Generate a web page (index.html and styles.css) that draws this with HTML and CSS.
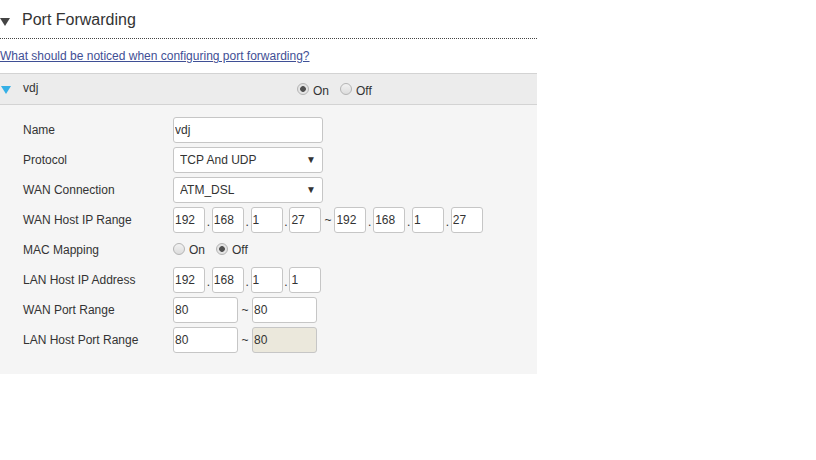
FILE: index.html
```html
<!DOCTYPE html>
<html lang="en">
<head>
    <meta charset="UTF-8">
    <title>Port Forwarding</title>
    <link rel="stylesheet" href="styles.css">
</head>
<body>

<div class="page">
    <div class="title">
        <svg class="title-arrow" width="10" height="8" viewBox="0 0 10 8"><polygon points="0,0 10,0 5,8" fill="#444"/></svg>
        <span>Port Forwarding</span>
    </div>

    <div class="notice">
        <a href="#">What should be noticed when configuring port forwarding?</a>
    </div>

    <div class="rule-bar">
        <svg class="bar-arrow" width="10" height="8" viewBox="0 0 10 8"><polygon points="0,0 10,0 5,8" fill="#35b0e6"/></svg>
        <span class="rule-name">vdj</span>
        <div class="radios bar-radios">
            <label><input type="radio" name="enable" checked> On</label>
            <label><input type="radio" name="enable"> Off</label>
        </div>
    </div>

    <div class="rule-body">
        <div class="row">
            <div class="label">Name</div>
            <input class="text wide" type="text" value="vdj">
        </div>
        <div class="row">
            <div class="label">Protocol</div>
            <span class="select-wrap">
                <select class="text wide select"><option>TCP And UDP</option></select>
                <span class="caret">&#9660;</span>
            </span>
        </div>
        <div class="row">
            <div class="label">WAN Connection</div>
            <span class="select-wrap">
                <select class="text wide select"><option>ATM_DSL</option></select>
                <span class="caret">&#9660;</span>
            </span>
        </div>
        <div class="row">
            <div class="label">WAN Host IP Range</div>
            <input class="text ip" value="192"><span class="dot">.</span><input class="text ip" value="168"><span class="dot">.</span><input class="text ip" value="1"><span class="dot">.</span><input class="text ip" value="27">
            <span class="tilde ip-tilde">~</span>
            <input class="text ip" value="192"><span class="dot">.</span><input class="text ip" value="168"><span class="dot">.</span><input class="text ip" value="1"><span class="dot">.</span><input class="text ip" value="27">
        </div>
        <div class="row">
            <div class="label">MAC Mapping</div>
            <div class="radios">
                <label><input type="radio" name="mac"> On</label>
                <label><input type="radio" name="mac" checked> Off</label>
            </div>
        </div>
        <div class="row">
            <div class="label">LAN Host IP Address</div>
            <input class="text ip" value="192"><span class="dot">.</span><input class="text ip" value="168"><span class="dot">.</span><input class="text ip" value="1"><span class="dot">.</span><input class="text ip" value="1">
        </div>
        <div class="row">
            <div class="label">WAN Port Range</div>
            <input class="text port" value="80">
            <span class="tilde">~</span>
            <input class="text port" value="80">
        </div>
        <div class="row">
            <div class="label">LAN Host Port Range</div>
            <input class="text port" value="80">
            <span class="tilde">~</span>
            <input class="text port" value="80" disabled>
        </div>
    </div>
</div>

</body>
</html>
```

FILE: styles.css
```css
/* Global */
body {
    margin: 0;
    font-family: 'Liberation Sans', Arial, sans-serif;
    font-size: 12px;
    color: #333;
    background-color: #fff;
}

.page {
    width: 537px;
}

/* Section title */
.title {
    display: flex;
    align-items: center;
    padding-top: 2px;
    box-sizing: border-box;
    border-bottom: 1px dotted #444;
    height: 39px;
    font-size: 16px;
    color: #333;
}

.title-arrow {
    margin: 3px 12px 0 0;
}

.notice {
    height: 34px;
    display: flex;
    align-items: center;
}

.notice a {
    color: #3f4f95;
    font-size: 12px;
}

/* Rule header bar */
.rule-bar {
    height: 30px;
    display: flex;
    align-items: center;
    background-color: #ececec;
    border-top: 1px solid #d3d3d3;
    border-bottom: 1px solid #d3d3d3;
}

.bar-arrow {
    margin: 1px 0 0 1px;
}

.rule-name {
    margin-left: 12px;
    width: 274px;
    margin-top: -3px;
}

.bar-radios {
    margin-top: 3px;
}

/* Rule body */
.rule-body {
    background-color: #f5f5f5;
    padding: 10px 0 19px 23px;
}

.row {
    height: 30px;
    display: flex;
    align-items: center;
}

.label {
    width: 150px;
}

.text {
    height: 26px;
    box-sizing: border-box;
    border: 1px solid #c6c6c6;
    border-radius: 3px;
    background-color: #fff;
    font-family: 'Liberation Sans', Arial, sans-serif;
    font-size: 12px;
    color: #333;
    padding: 0 1px;
    margin: 0;
    outline: none;
}

.text:disabled {
    background-color: #ebe8dc;
    color: #333;
}

.wide {
    width: 150px;
}

.select-wrap {
    position: relative;
    display: inline-block;
    height: 26px;
}

.select {
    appearance: none;
    -webkit-appearance: none;
    padding-left: 6px;
}

.caret {
    position: absolute;
    right: 7px;
    top: 7px;
    font-size: 10px;
    color: #333;
    pointer-events: none;
}

.ip {
    width: 32px;
}

.dot {
    width: 6.8px;
    text-align: center;
    align-self: flex-end;
    margin-bottom: 6px;
    font-size: 12px;
}

.tilde {
    width: 14px;
    text-align: center;
}

.ip-tilde {
    width: 13px;
}

.port {
    width: 65px;
}

/* Radios */
.radios {
    display: flex;
    align-items: center;
}

.radios label {
    display: flex;
    align-items: center;
    margin-right: 11px;
}

.radios label:last-child {
    margin-right: 0;
}

.radios input {
    appearance: none;
    -webkit-appearance: none;
    width: 12px;
    height: 12px;
    margin: -3px 4px 0 0;
    border: 1px solid #b4b4b4;
    border-radius: 50%;
    background: linear-gradient(#f2f2f2, #dcdcdc);
}

.radios input:checked {
    background: radial-gradient(circle, #505050 0 2.5px, #e4e4e4 3.2px);
}
```
